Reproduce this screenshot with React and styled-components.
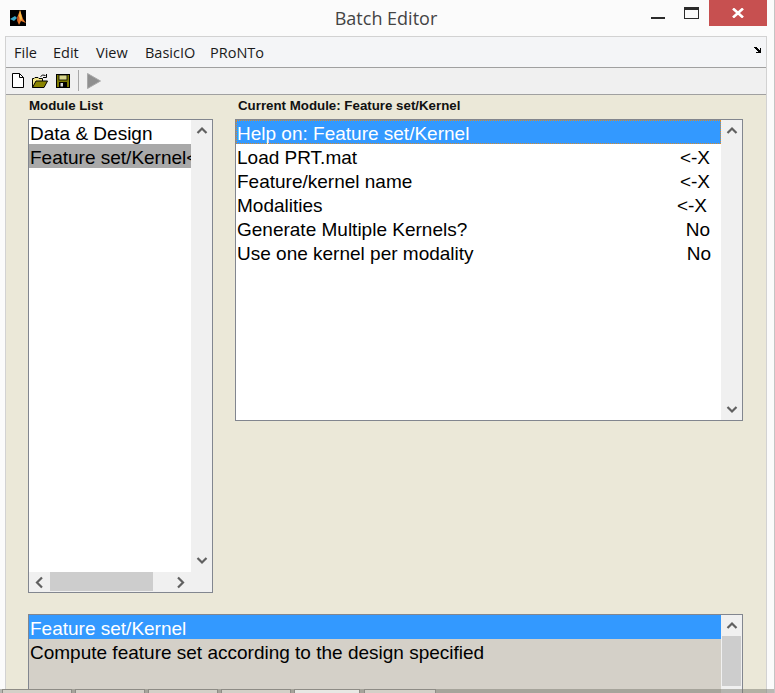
import styled, { createGlobalStyle } from "styled-components";

const GlobalStyle = createGlobalStyle`
  html, body {
    margin: 0;
    padding: 0;
    background: #fbfbfb;
  }
`;

const Screen = styled.div`
  position: relative;
  width: 775px;
  height: 693px;
  overflow: hidden;
  background: #fbfbfb;
  font-family: "Liberation Sans", Arial, sans-serif;
  border-right: 1px solid #c4c4c4;
  box-sizing: border-box;
`;

const TitleBar = styled.div`
  position: relative;
  display: flex;
  justify-content: center;
  height: 36px;
  padding-top: 6px;
  box-sizing: border-box;
`;

const AppIcon = styled.svg`
  position: absolute;
  left: 10px;
  top: 10px;
`;

const Title = styled.div`
  font-family: "Open Sans", sans-serif;
  font-size: 18px;
  line-height: 25px;
  color: #444;
  margin-left: -2px;
`;

const WindowButtons = styled.div`
  position: absolute;
  top: 0;
  right: 7px;
  display: flex;
  align-items: flex-start;
`;

const Minimize = styled.div`
  width: 14px;
  height: 2px;
  margin: 17px 19px 0 0;
  background: #2b2b2b;
`;

const Maximize = styled.div`
  width: 15px;
  height: 12px;
  margin: 7px 10px 0 0;
  box-sizing: border-box;
  border: 1px solid #2b2b2b;
  border-top-width: 3px;
`;

const CloseButton = styled.div`
  width: 58px;
  height: 26px;
  display: flex;
  align-items: center;
  justify-content: center;
  background: #c75050;
`;

const Window = styled.div`
  margin: 0 7px 0 5px;
  height: 657px;
  box-sizing: border-box;
  border: 1px solid #d2d2d2;
  border-bottom: none;
  display: flex;
  flex-direction: column;
  overflow: hidden;
`;

const MenuBar = styled.div`
  position: relative;
  flex: none;
  display: flex;
  align-items: center;
  height: 30px;
  padding-left: 8px;
  background: #f4f5f7;
  border-bottom: 1px solid #a0a0a0;
  font-family: "Open Sans", sans-serif;
  font-size: 14.5px;
  color: #1a1a1a;
`;

const MenuItem = styled.span`
  width: ${(p) => p.$width}px;
  flex: none;
`;

const DockArrow = styled.svg`
  position: absolute;
  right: 4px;
  top: 10px;
`;

const ToolBar = styled.div`
  flex: none;
  display: flex;
  align-items: center;
  gap: 8px;
  height: 27px;
  padding: 0 0 1px 6px;
  box-sizing: border-box;
  background: #f0f0f0;
  border-bottom: 1px solid #a0a0a0;
`;

const ToolSeparator = styled.div`
  width: 1px;
  height: 21px;
  background: #a8a8a8;
`;

const Panel = styled.div`
  flex: 1;
  min-height: 0;
  padding: 0 23px 0 22px;
  background: #ebe8d8;
`;

const Columns = styled.div`
  display: flex;
  gap: 22px;
  align-items: flex-start;
`;

const Column = styled.div`
  width: ${(p) => p.$width}px;
  flex: none;
`;

const Label = styled.div`
  height: 20px;
  margin-bottom: 4px;
  padding-top: 3px;
  padding-left: ${(p) => p.$indent}px;
  box-sizing: border-box;
  font-size: 13.3px;
  line-height: 15px;
  font-weight: 700;
  color: #111;
  white-space: nowrap;
`;

const ListBox = styled.div`
  display: grid;
  grid-template-columns: 1fr 21px;
  grid-template-rows: 1fr ${(p) => (p.$horizontal ? "20px" : "0")};
  height: ${(p) => p.$height}px;
  box-sizing: border-box;
  border: 1px solid #82868f;
  background: ${(p) => p.$bg || "#fff"};
  overflow: hidden;
`;

const Rows = styled.div`
  min-width: 0;
  overflow: hidden;
`;

const Row = styled.div`
  position: relative;
  display: flex;
  justify-content: space-between;
  height: 24px;
  box-sizing: border-box;
  padding: 0 ${(p) => p.$padRight || 0}px 0 ${(p) => p.$padLeft || 1}px;
  font-size: 19px;
  line-height: 28px;
  white-space: nowrap;
  overflow: hidden;
  color: ${(p) => (p.$selected ? "#fff" : "#000")};
  background: ${(p) => (p.$selected ? "#3399ff" : p.$muted ? "#a9a9a9" : "transparent")};

  ${(p) =>
    p.$focused &&
    `
    &::after {
      content: "";
      position: absolute;
      inset: 0;
      border: 1px dotted #d98a2b;
    }
  `}
`;

const Value = styled.span`
  margin-right: ${(p) => p.$shift || 0}px;
`;

const VScroll = styled.div`
  display: flex;
  flex-direction: column;
  justify-content: space-between;
  padding-bottom: ${(p) => p.$lift || 0}px;
  background: #f0f0f0;
`;

const ScrollTop = styled.div`
  display: flex;
  flex-direction: column;
`;

const ArrowCell = styled.div`
  display: flex;
  align-items: center;
  justify-content: center;
  height: 20px;
  width: ${(p) => (p.$horizontal ? "21px" : "auto")};
  flex: none;
`;

const VThumb = styled.div`
  height: 50px;
  width: 19px;
  margin: 1px 0 0 1px;
  background: #cdcdcd;
`;

const HScroll = styled.div`
  display: flex;
  align-items: stretch;
  background: #f0f0f0;
`;

const HThumb = styled.div`
  width: 103px;
  margin-bottom: 1px;
  background: #cdcdcd;
`;

const HFill = styled.div`
  flex: 1;
`;

const ScrollCorner = styled.div`
  background: #f0f0f0;
`;

const DescriptionBox = styled(ListBox)`
  margin-top: 21px;
`;

const TaskStrip = styled.div`
  position: absolute;
  left: 0;
  right: 0;
  bottom: 0;
  height: 4px;
  display: flex;
  gap: 3px;
  padding-left: 2px;
  background: rgba(120, 120, 110, 0.5);
`;

const TaskTab = styled.div`
  width: ${(p) => p.$width}px;
  margin-right: ${(p) => p.$gap || 0}px;
  box-sizing: border-box;
  border: 1px solid #8e8c86;
  border-bottom: none;
  background: ${(p) => (p.$active ? "#e8e8e4" : "#d4d0c8")};
`;

const Chevron = ({ dir }) => {
  const points = {
    up: "2.5,8 7,3.5 11.5,8",
    down: "2.5,3 7,7.5 11.5,3",
    left: "8,1.5 3,6.5 8,11.5",
    right: "3,1.5 8,6.5 3,11.5",
  }[dir];
  const vertical = dir === "up" || dir === "down";
  return (
    <svg width={vertical ? 14 : 11} height={vertical ? 11 : 13} viewBox={vertical ? "0 0 14 11" : "0 0 11 13"}>
      <polyline points={points} fill="none" stroke="#606060" strokeWidth="2.2" />
    </svg>
  );
};

const MatlabLogo = () => (
  <AppIcon width="16" height="16" viewBox="0 0 16 16">
    <rect width="16" height="16" fill="#000" />
    <path d="M0 9 L5 6 L7 8 L4 11 Z" fill="#3aa6c8" />
    <path d="M7 8 L10 0 L13 9 L16 13 L11 11 L9 15 L7 10 Z" fill="#e8792a" />
    <path d="M10 0 L12 8 L11 11 L9 6 Z" fill="#f6c04a" />
    <path d="M7 8 L9 6 L8 13 Z" fill="#a8401a" />
  </AppIcon>
);

const NewIcon = () => (
  <svg width="12" height="15" viewBox="0 0 12 15">
    <path d="M0.5 0.5 H7.5 L11.5 4.5 V14.5 H0.5 Z" fill="#fff" stroke="#000" />
    <path d="M7.5 0.5 V4.5 H11.5" fill="none" stroke="#000" />
  </svg>
);

const OpenIcon = () => (
  <svg width="16" height="14" viewBox="0 0 16 14">
    <path d="M0.5 13.5 V4.5 H2 L3 3.5 H6 L7 4.5 H10.5 V7" fill="#f5e98a" stroke="#000" />
    <path d="M0.5 13.5 L4 7 H15.5 L12 13.5 Z" fill="#8a8400" stroke="#000" />
    <path d="M8.5 2.5 Q10.5 0 13.5 1.5 M14.5 0 V3.5 H11" fill="none" stroke="#000" />
  </svg>
);

const SaveIcon = () => (
  <svg width="14" height="14" viewBox="0 0 14 14">
    <rect x="0.5" y="0.5" width="13" height="13" fill="#7d7a00" stroke="#000" />
    <rect x="3" y="1" width="8" height="5" fill="#d8d68a" stroke="#000" strokeWidth="0.8" />
    <rect x="3" y="8" width="8" height="5.5" fill="#000" />
    <rect x="4.5" y="9" width="2.5" height="3.5" fill="#d8d8d8" />
  </svg>
);

const RunIcon = () => (
  <svg width="14" height="16" viewBox="0 0 14 16">
    <path d="M0.5 0.5 L13.5 8 L0.5 15.5 Z" fill="#8f8f8f" stroke="#a8a8a8" />
  </svg>
);

const menus = [
  ["File", 39],
  ["Edit", 43],
  ["View", 49],
  ["BasicIO", 65],
  ["PRoNTo", 60],
];

const options = [
  ["Load PRT.mat", "<-X", 0],
  ["Feature/kernel name", "<-X", 0],
  ["Modalities", "<-X", 3],
  ["Generate Multiple Kernels?", "No", 0],
  ["Use one kernel per modality", "No", -1],
];

const tabs = [70, 70, 70, 70, 66, 72];

const App = () => (
  <>
    <GlobalStyle />
    <Screen>
      <TitleBar>
        <MatlabLogo />
        <Title>Batch Editor</Title>
        <WindowButtons>
          <Minimize />
          <Maximize />
          <CloseButton>
            <svg width="12" height="10" viewBox="0 0 12 10">
              <path d="M1 0.5 L11 9.5 M11 0.5 L1 9.5" stroke="#fff" strokeWidth="2.6" />
            </svg>
          </CloseButton>
        </WindowButtons>
      </TitleBar>
      <Window>
        <MenuBar>
          {menus.map(([m, w]) => (
            <MenuItem key={m} $width={w}>{m}</MenuItem>
          ))}
          <DockArrow width="8" height="7" viewBox="0 0 8 7">
            <path d="M0 0 H3 V1 H4 V2 H5 V3 H6 V1 H7 V6 H2 V5 H4 V4 H3 V3 H2 V2 H1 V1 H0 Z" fill="#000" />
          </DockArrow>
        </MenuBar>
        <ToolBar>
          <NewIcon />
          <OpenIcon />
          <SaveIcon />
          <ToolSeparator />
          <RunIcon />
        </ToolBar>
        <Panel>
          <Columns>
            <Column $width={185}>
              <Label $indent={1}>Module List</Label>
              <ListBox $height={474} $horizontal>
                <Rows>
                  <Row>Data &amp; Design</Row>
                  <Row $muted>Feature set/Kernel&lt;-X</Row>
                </Rows>
                <VScroll $lift={2}>
                  <ArrowCell><Chevron dir="up" /></ArrowCell>
                  <ArrowCell><Chevron dir="down" /></ArrowCell>
                </VScroll>
                <HScroll>
                  <ArrowCell $horizontal><Chevron dir="left" /></ArrowCell>
                  <HThumb />
                  <HFill />
                  <ArrowCell $horizontal><Chevron dir="right" /></ArrowCell>
                </HScroll>
                <ScrollCorner />
              </ListBox>
            </Column>
            <Column $width={508}>
              <Label $indent={3}>Current Module: Feature set/Kernel</Label>
              <ListBox $height={302}>
                <Rows>
                  <Row $selected $focused>Help on: Feature set/Kernel</Row>
                  {options.map(([name, value, shift]) => (
                    <Row key={name} $padRight={11}>
                      <span>{name}</span>
                      <Value $shift={shift}>{value}</Value>
                    </Row>
                  ))}
                </Rows>
                <VScroll $lift={1}>
                  <ArrowCell><Chevron dir="up" /></ArrowCell>
                  <ArrowCell><Chevron dir="down" /></ArrowCell>
                </VScroll>
              </ListBox>
            </Column>
          </Columns>
          <DescriptionBox $height={90} $bg="#d4d0c8">
            <Rows>
              <Row $selected>Feature set/Kernel</Row>
              <Row>Compute feature set according to the design specified</Row>
            </Rows>
            <VScroll>
              <ScrollTop>
                <ArrowCell><Chevron dir="up" /></ArrowCell>
                <VThumb />
              </ScrollTop>
            </VScroll>
          </DescriptionBox>
        </Panel>
      </Window>
      <TaskStrip>
        {tabs.map((w, i) => (
          <TaskTab key={i} $width={w} $active={i === 4} $gap={i === 4 ? 1 : 0} />
        ))}
      </TaskStrip>
    </Screen>
  </>
);

export default App;
